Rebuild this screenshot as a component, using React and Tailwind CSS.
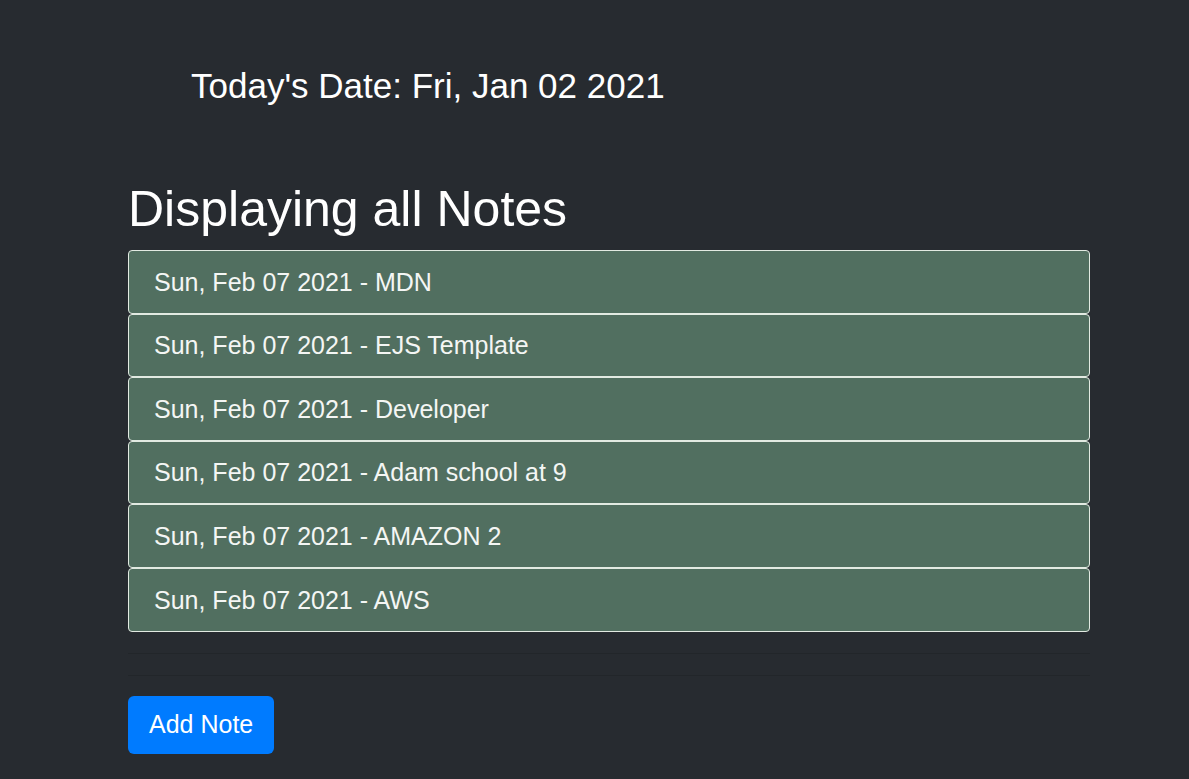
const notes = [
  'MDN',
  'EJS Template',
  'Developer',
  'Adam school at 9',
  'AMAZON 2',
  'AWS',
]

export default function App() {
  return (
    <div className="min-h-screen bg-[#272b30] text-white font-['Liberation_Sans',Arial,sans-serif]">
      <div className="ml-[128px] w-[962px] pt-[65px]">
        {/* date */}
        <h3 className="pl-[63px] text-[35px] leading-[42px] text-white">Today's Date: Fri, Jan 02 2021</h3>

        <h1 className="mt-[72px] text-[50px] leading-[60px] text-white">Displaying all Notes</h1>

        {/* notes list */}
        <div className="mt-[11px] flex flex-col">
          {notes.map(n => (
            <div key={n} className="h-[63.6px] flex items-center pl-[25px] pt-[1px] bg-[#516f60] border border-[#e2eae2] rounded-[4px] text-[25px] text-[#f4f6f4]">
              Sun, Feb 07 2021 - {n}
            </div>
          ))}
        </div>

        <hr className="mt-[21px] border-0 border-t border-[#22262a]" />
        <hr className="mt-[21px] border-0 border-t border-[#22262a]" />

        <button className="mt-[20px] h-[58px] px-[21px] rounded-[6px] bg-[#007bff] text-white text-[25px]">
          Add Note
        </button>
      </div>
    </div>
  )
}
